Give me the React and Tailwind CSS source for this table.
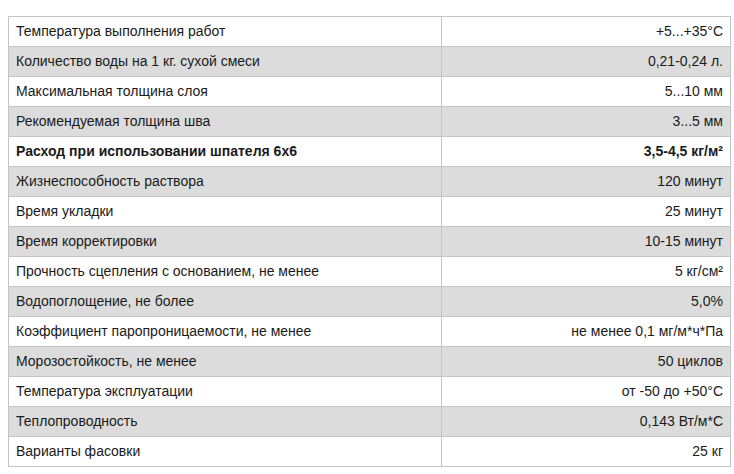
const rows = [
  ["Температура выполнения работ", "+5...+35°C"],
  ["Количество воды на 1 кг. сухой смеси", "0,21-0,24 л."],
  ["Максимальная толщина слоя", "5...10 мм"],
  ["Рекомендуемая толщина шва", "3...5 мм"],
  ["Расход при использовании шпателя 6х6", "3,5-4,5 кг/м²", true],
  ["Жизнеспособность раствора", "120 минут"],
  ["Время укладки", "25 минут"],
  ["Время корректировки", "10-15 минут"],
  ["Прочность сцепления с основанием, не менее", "5 кг/см²"],
  ["Водопоглощение, не более", "5,0%"],
  ["Коэффициент паропроницаемости, не менее", "не менее 0,1 мг/м*ч*Па"],
  ["Морозостойкость, не менее", "50 циклов"],
  ["Температура эксплуатации", "от -50 до +50°C"],
  ["Теплопроводность", "0,143 Вт/м*С"],
  ["Варианты фасовки", "25 кг"],
];

export default function App() {
  return (
    <div className="w-[734px] h-[474px] bg-white pt-[16px] pl-[8px] font-['Liberation_Sans',Arial,sans-serif] text-[14px] text-[#1a1a1a]">
      <table className="w-[723px] border-collapse border border-[#c4c4c4]">
        <tbody>
          {rows.map(([label, value, bold], i) => (
            <tr
              key={label}
              className={`h-[30px] ${i % 2 === 1 ? "bg-[#dcdcdc]" : "bg-white"} ${bold ? "font-bold" : ""}`}
            >
              <td className="w-[433px] border border-[#c4c4c4] pl-[7px] pb-[1px] text-left">
                {label}
              </td>
              <td className="border border-[#c4c4c4] pr-[7px] pb-[1px] text-right">
                {value}
              </td>
            </tr>
          ))}
        </tbody>
      </table>
    </div>
  );
}
